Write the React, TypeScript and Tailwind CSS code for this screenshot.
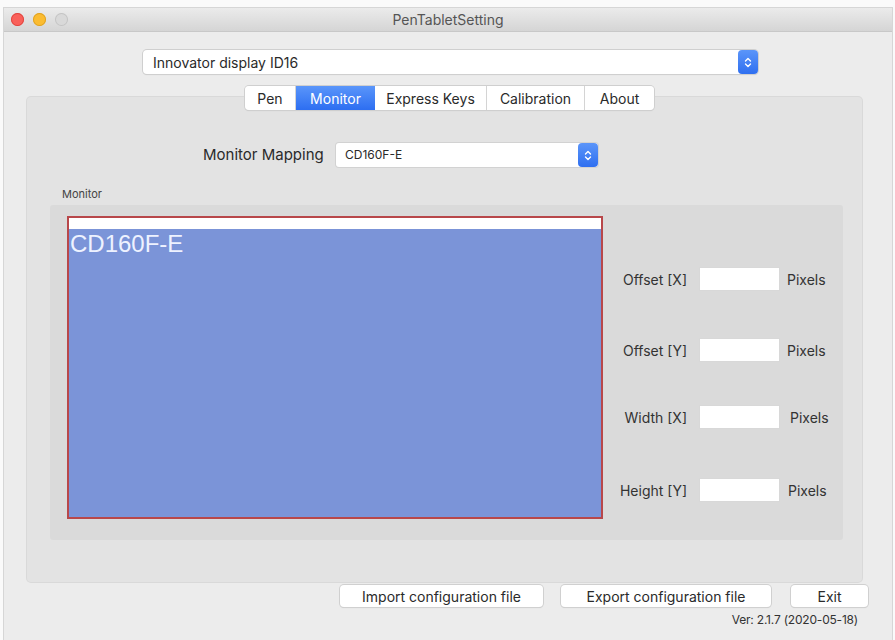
import React from "react";

const font = { fontFamily: "Inter, 'Noto Sans', sans-serif" };

function Stepper({ className = "" }: { className?: string }) {
  return (
    <div
      className={`flex items-center justify-center rounded-[4px] bg-gradient-to-b from-[#5b95f9] to-[#2f6ff0] ${className}`}
    >
      <svg width="8" height="13" viewBox="0 0 8 13" fill="none">
        <path d="M1.5 5 L4 2.5 L6.5 5" stroke="white" strokeWidth="1.4" strokeLinecap="round" strokeLinejoin="round" />
        <path d="M1.5 8 L4 10.5 L6.5 8" stroke="white" strokeWidth="1.4" strokeLinecap="round" strokeLinejoin="round" />
      </svg>
    </div>
  );
}

function Tab({ label, active, w }: { label: string; active?: boolean; w: string }) {
  return (
    <div
      className={`flex h-[24px] items-center justify-center text-[14px] ${w} ${
        active
          ? "bg-gradient-to-b from-[#5a95fa] to-[#2d6ef1] text-white"
          : "bg-white text-[#2a2a2a] border-r border-[#d4d4d4] last:border-r-0"
      }`}
    >
      {label}
    </div>
  );
}

function Field({ label, mt, pixelsMl }: { label: string; mt: string; pixelsMl: string }) {
  return (
    <div className={`flex items-center ${mt}`}>
      <div className="w-[650px] pr-[13px] text-right text-[14px] text-[#333]">{label}</div>
      <div className="h-[22px] w-[79px] bg-white shadow-[0_0_0_1px_#d8d8d8]" />
      <div className={`${pixelsMl} text-[14px] text-[#333]`}>Pixels</div>
    </div>
  );
}

function Button({ label, w, ml }: { label: string; w: string; ml: string }) {
  return (
    <div
      className={`flex h-[22px] items-center justify-center rounded-[4px] bg-white text-[14px] text-[#2a2a2a] shadow-[0_0_0_1px_#d0d0d0,0_1px_1px_rgba(0,0,0,0.15)] ${w} ${ml}`}
    >
      {label}
    </div>
  );
}

export default function App() {
  return (
    <div className="h-[640px] w-[895px] overflow-hidden bg-[#fafafa] pl-[4px] pr-[3px] pt-[8px]" style={font}>
      <div className="flex h-[632px] flex-col bg-[#ececec] shadow-[0_0_0_1px_#d6d6d6]">
        {/* title bar */}
        <div className="relative flex h-[24px] items-center justify-center bg-gradient-to-b from-[#ebebeb] to-[#d5d5d5] border-b border-[#c8c8c8]">
          <div className="absolute left-[7px] top-[5px] flex gap-[9px]">
            <div className="h-[13px] w-[13px] rounded-full bg-[#f9605a] shadow-[inset_0_0_0_1px_#e0443e]" />
            <div className="h-[13px] w-[13px] rounded-full bg-[#fbbc31] shadow-[inset_0_0_0_1px_#dea123]" />
            <div className="h-[13px] w-[13px] rounded-full bg-[#d9d9d9] shadow-[inset_0_0_0_1px_#c4c4c4]" />
          </div>
          <span className="text-[14px] text-[#555]">PenTabletSetting</span>
        </div>

        {/* device selector */}
        <div className="ml-[139px] mt-[18px] flex h-[24px] w-[615px] items-center rounded-[4px] bg-white shadow-[0_0_0_1px_#cfcfcf,0_1px_1px_rgba(0,0,0,0.12)]">
          <span className="ml-[10px] flex-1 text-[14px] text-[#2a2a2a]">Innovator display ID16</span>
          <Stepper className="h-[24px] w-[20px]" />
        </div>

        {/* tabs */}
        <div className="relative z-10 -mb-[13px] ml-[241px] mt-[12px] flex w-fit overflow-hidden rounded-[4px] shadow-[0_0_0_1px_#cfcfcf,0_1px_1px_rgba(0,0,0,0.12)]">
          <Tab label="Pen" w="w-[51px]" />
          <Tab label="Monitor" active w="w-[79px]" />
          <Tab label="Express Keys" w="w-[112px]" />
          <Tab label="Calibration" w="w-[98px]" />
          <Tab label="About" w="w-[69px]" />
        </div>

        {/* tab panel */}
        <div className="ml-[23px] flex h-[485px] w-[835px] flex-col rounded-[4px] bg-[#e3e3e3] shadow-[0_0_0_1px_#d9d9d9]">
          <div className="ml-[176px] mt-[46px] flex items-center">
            <span className="w-[123px] text-[15px] text-[#2a2a2a]">Monitor Mapping</span>
            <div className="ml-[10px] flex h-[24px] w-[262px] items-center rounded-[3px] bg-white shadow-[0_0_0_1px_#d2d2d2]">
              <span className="ml-[9px] flex-1 text-[12px] text-[#2a2a2a]">CD160F-E</span>
              <Stepper className="h-[24px] w-[20px]" />
            </div>
          </div>

          <div className="ml-[35px] mt-[20px] text-[11px] leading-[14px] text-[#444]">Monitor</div>

          {/* monitor group */}
          <div className="relative ml-[23px] mt-[4px] h-[335px] w-[793px] rounded-[3px] bg-[#dadada]">
            <div className="ml-[17px] mt-[11px] flex h-[303px] w-[536px] flex-col border-2 border-[#b8474a] bg-[#7b94d8]">
              <div className="h-[11px] bg-white" />
              <div className="ml-[1px] mt-[1px] text-[24px] leading-[28px] text-[#eef2ff]" style={{ fontFamily: "'Liberation Sans', Arial, sans-serif" }}>
                CD160F-E
              </div>
            </div>
            <div className="absolute left-0 top-0 flex w-full flex-col">
              <Field label="Offset [X]" mt="mt-[63px]" pixelsMl="ml-[8px]" />
              <Field label="Offset [Y]" mt="mt-[49px]" pixelsMl="ml-[8px]" />
              <Field label="Width [X]" mt="mt-[45px]" pixelsMl="ml-[11px]" />
              <Field label="Height [Y]" mt="mt-[51px]" pixelsMl="ml-[9px]" />
            </div>
          </div>
        </div>

        {/* bottom buttons */}
        <div className="mt-[3px] flex">
          <Button label="Import configuration file" w="w-[203px]" ml="ml-[336px]" />
          <Button label="Export configuration file" w="w-[210px]" ml="ml-[18px]" />
          <Button label="Exit" w="w-[77px]" ml="ml-[20px]" />
        </div>
        <div className="mr-[34px] mt-[4px] text-right text-[12px] tracking-[-0.2px] text-[#333]">Ver: 2.1.7 (2020-05-18)</div>
      </div>
    </div>
  );
}
